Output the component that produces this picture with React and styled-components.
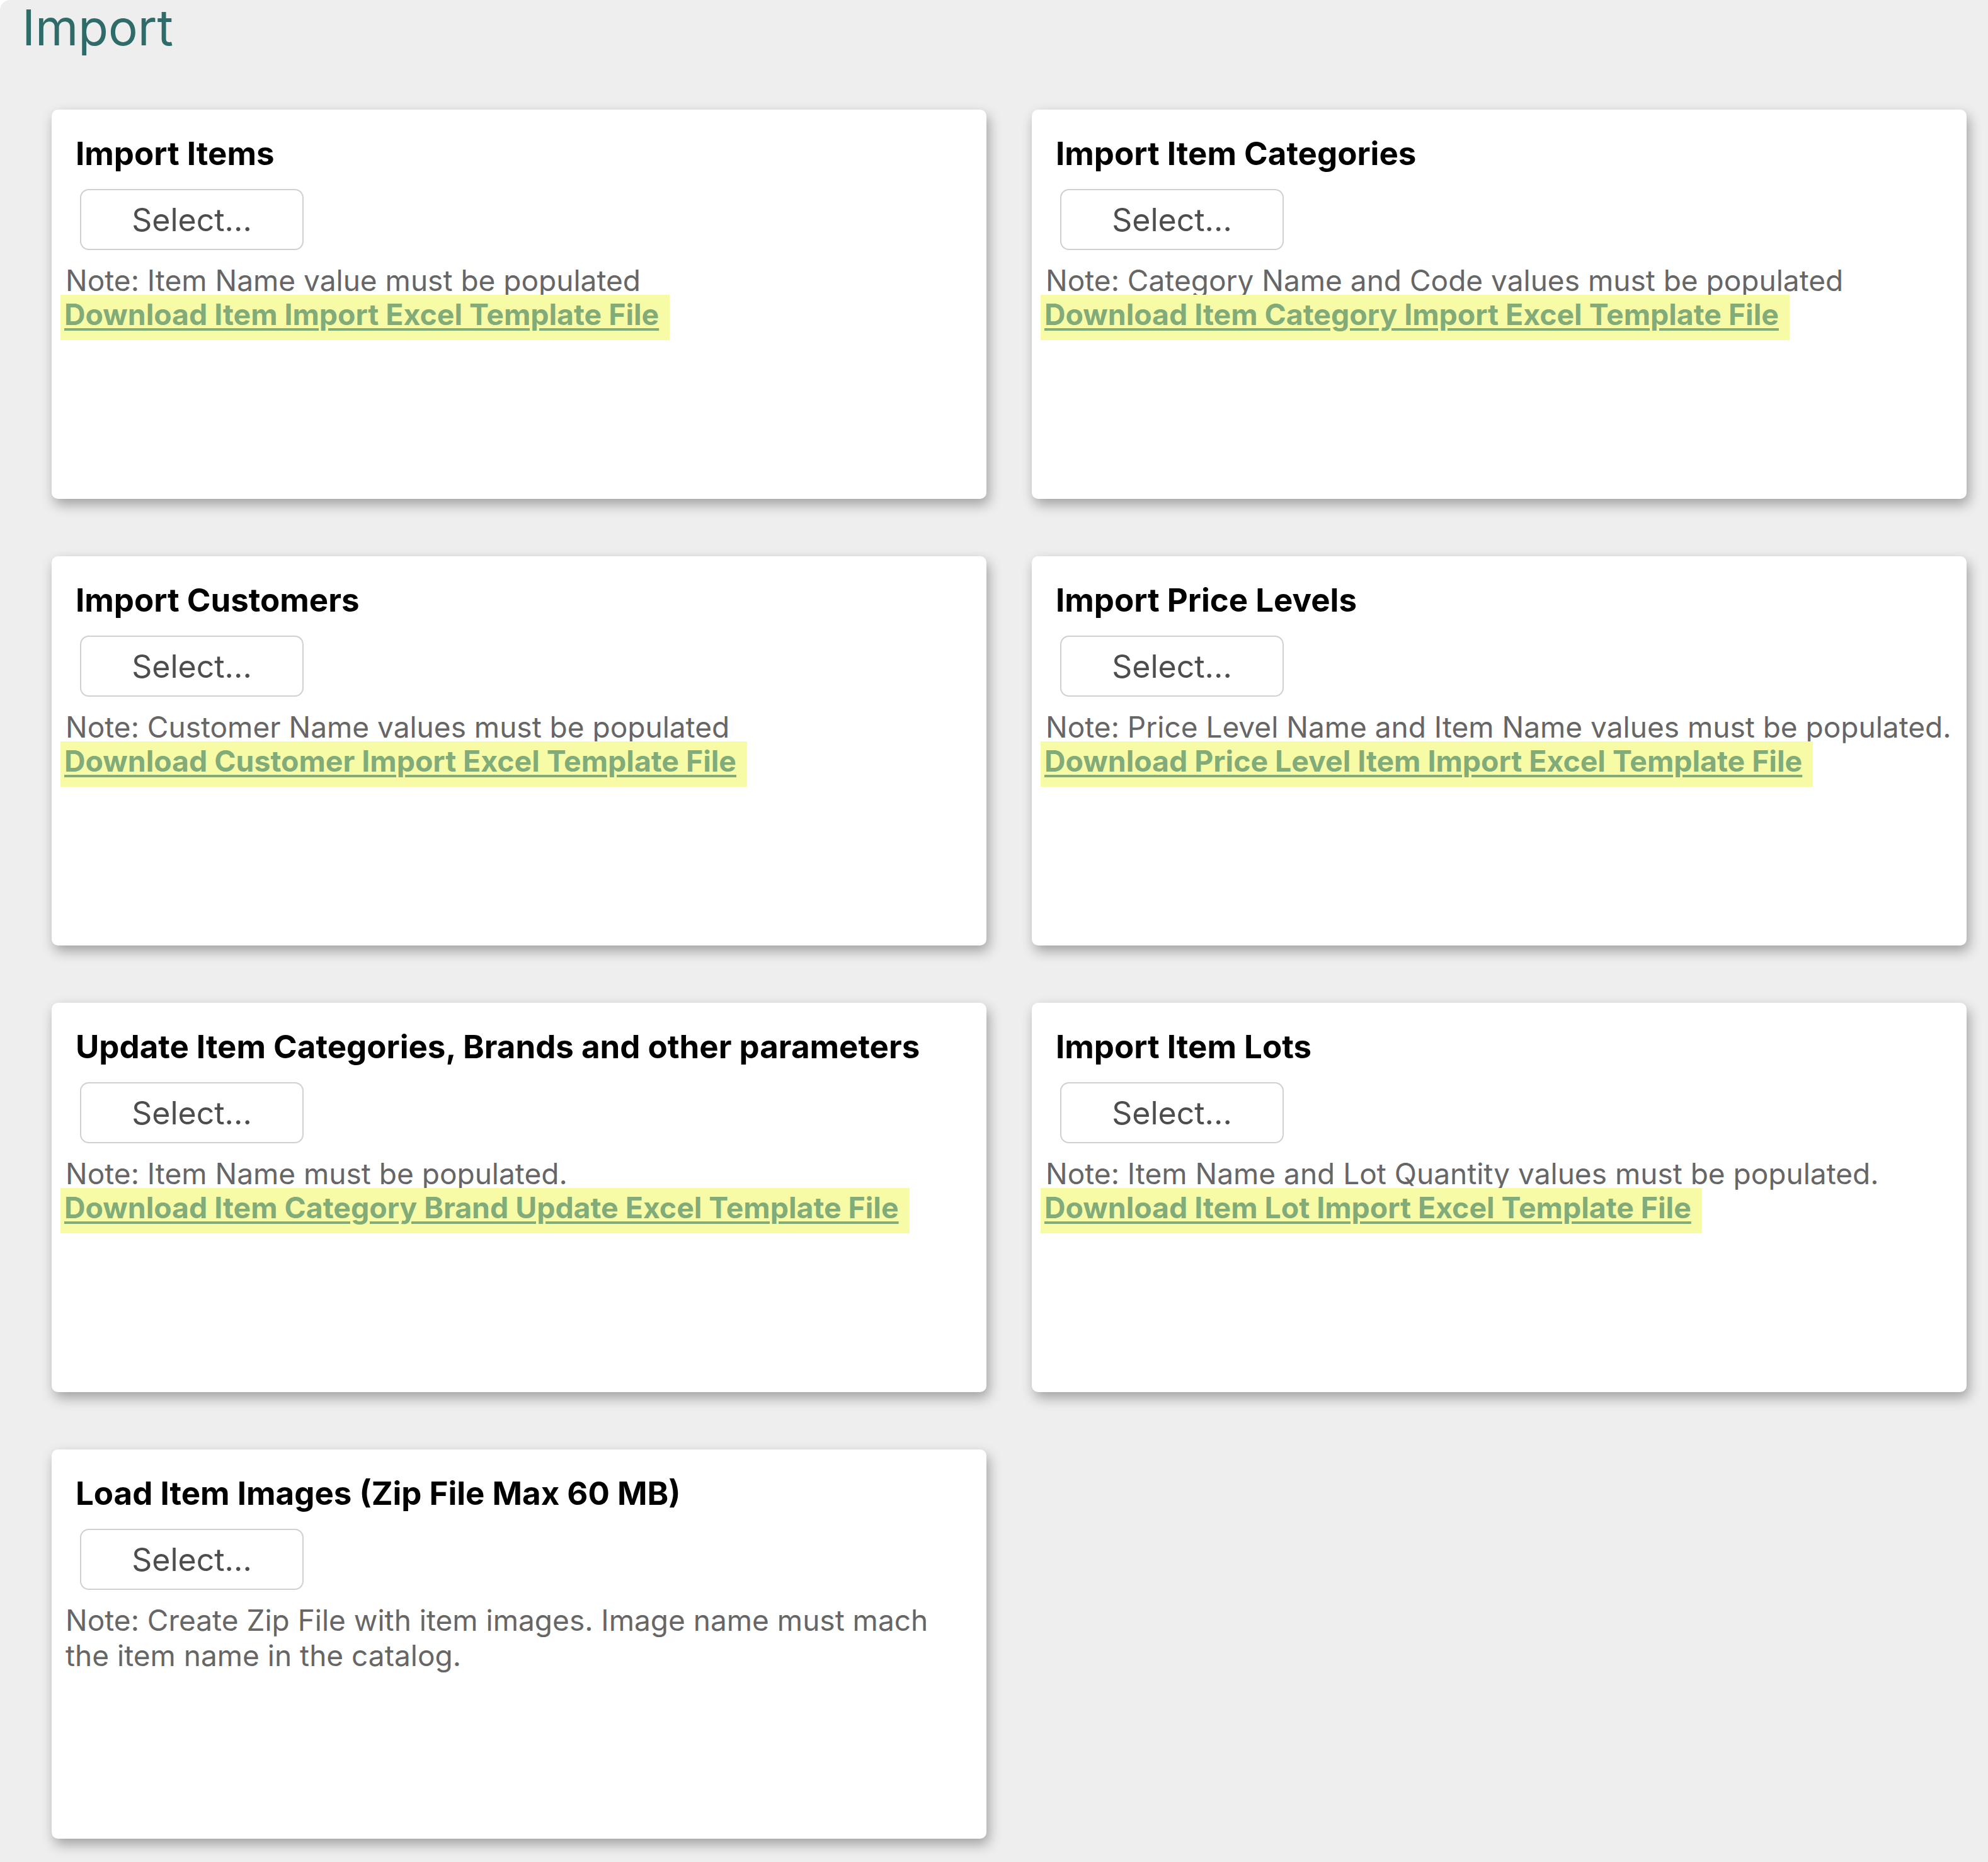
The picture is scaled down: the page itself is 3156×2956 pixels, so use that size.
import React from "react";
import styled, { createGlobalStyle } from "styled-components";

const GlobalStyle = createGlobalStyle`
  html, body {
    margin: 0;
    padding: 0;
    background: #ffffff;
  }
  body {
    font-family: Inter, "Noto Sans", "Liberation Sans", sans-serif;
  }
`;

const Page = styled.main`
  min-height: 2956px;
  box-sizing: border-box;
  background: #eeeeee;
  border-radius: 16px 0 0 0;
  padding: 5px 0 0 0;
`;

const Title = styled.h1`
  margin: 0 0 91px 35px;
  font-size: 78px;
  line-height: 78px;
  font-weight: 400;
  color: #2e6b69;
`;

const Grid = styled.section`
  display: grid;
  grid-template-columns: repeat(2, 1484px);
  column-gap: 72px;
  row-gap: 91px;
  padding-left: 82px;
`;

const Card = styled.article`
  height: 618px;
  box-sizing: border-box;
  background: #ffffff;
  border-radius: 10px;
  box-shadow: 4px 9px 20px rgba(0, 0, 0, 0.33);
  padding-top: 40px;
  display: flex;
  flex-direction: column;
  align-items: flex-start;
`;

const Heading = styled.h3`
  margin: 0 0 0 38px;
  font-size: 51px;
  line-height: 60px;
  font-weight: 700;
  color: #000000;
`;

const SelectButton = styled.button`
  margin: 26px 0 0 45px;
  width: 355px;
  height: 97px;
  box-sizing: border-box;
  border: 2px solid #d0d0d0;
  border-radius: 14px;
  background: #ffffff;
  font-family: inherit;
  font-size: 50px;
  font-weight: 400;
  color: #4d4d4d;
  cursor: pointer;
`;

const Note = styled.p`
  margin: 20px 20px 0 22px;
  font-size: 46px;
  line-height: 56px;
  color: #666666;
`;

const TemplateLink = styled.a`
  margin: -5px 0 0 14px;
  display: inline-block;
  padding: 0 17px 9px 6px;
  line-height: 63px;
  font-size: 46.4px;
  font-weight: 700;
  color: #82ab7a;
  background: #f8fba6;
  text-decoration: underline;
  text-decoration-thickness: 4px;
  text-underline-offset: 5px;
`;

const imports = [
  {
    title: "Import Items",
    note: "Note: Item Name value must be populated",
    link: "Download Item Import Excel Template File",
  },
  {
    title: "Import Item Categories",
    note: "Note: Category Name and Code values must be populated",
    link: "Download Item Category Import Excel Template File",
  },
  {
    title: "Import Customers",
    note: "Note: Customer Name values must be populated",
    link: "Download Customer Import Excel Template File",
  },
  {
    title: "Import Price Levels",
    note: "Note: Price Level Name and Item Name values must be populated.",
    link: "Download Price Level Item Import Excel Template File",
  },
  {
    title: "Update Item Categories, Brands and other parameters",
    note: "Note: Item Name must be populated.",
    link: "Download Item Category Brand Update Excel Template File",
  },
  {
    title: "Import Item Lots",
    note: "Note: Item Name and Lot Quantity values must be populated.",
    link: "Download Item Lot Import Excel Template File",
  },
  {
    title: "Load Item Images (Zip File Max 60 MB)",
    note: "Note: Create Zip File with item images. Image name must mach the item name in the catalog.",
  },
];

const App = () => {
  return (
    <>
      <GlobalStyle />
      <Page>
        <Title>Import</Title>
        <Grid>
          {imports.map((item) => (
            <Card key={item.title}>
              <Heading>{item.title}</Heading>
              <SelectButton type="button">Select...</SelectButton>
              <Note>{item.note}</Note>
              {item.link && <TemplateLink href="#">{item.link}</TemplateLink>}
            </Card>
          ))}
        </Grid>
      </Page>
    </>
  );
};

export default App;
